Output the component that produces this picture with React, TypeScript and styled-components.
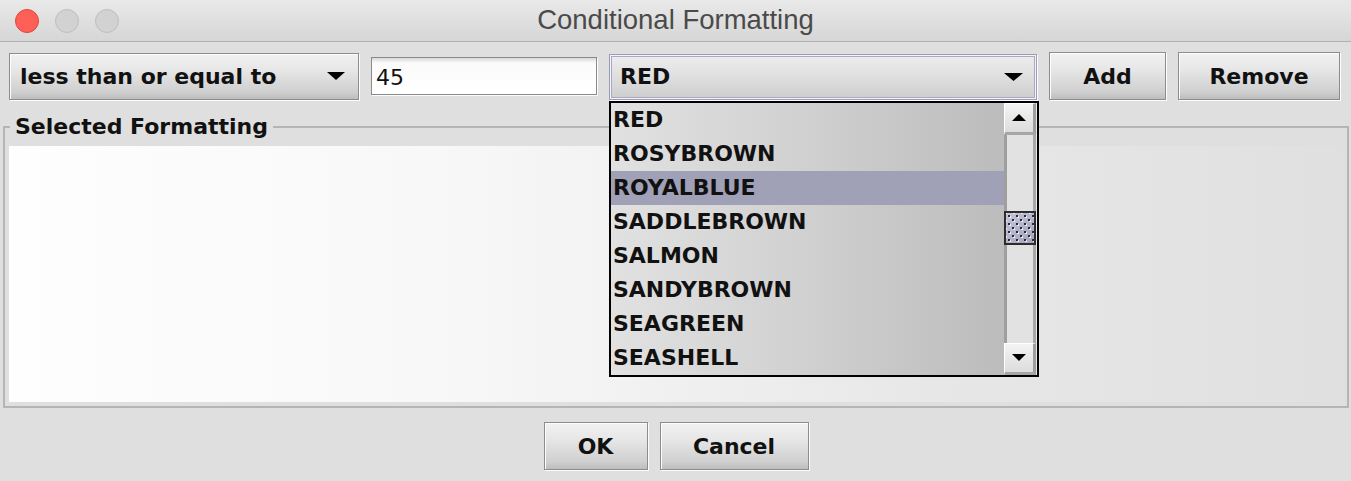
import React from 'react';
import styled, { createGlobalStyle } from 'styled-components';

const Global = createGlobalStyle`
  html, body { margin: 0; padding: 0; background: #dfdfdf; }
  body { font-family: "DejaVu Sans", sans-serif; }
  * { box-sizing: border-box; }
`;

const Window = styled.div`
  width: 1351px;
  height: 481px;
  display: flex;
  flex-direction: column;
  background: #dfdfdf;
  overflow: hidden;
`;

const TitleBar = styled.div`
  height: 42px;
  flex: none;
  display: grid;
  grid-template-columns: 1fr auto 1fr;
  align-items: center;
  background: linear-gradient(#e9e9e9, #d6d6d6);
  border-bottom: 1px solid #b0b0b0;
`;

const Lights = styled.div`
  display: flex;
  gap: 16px;
  padding-left: 15px;
`;

const Light = styled.span<{ $c: string; $b: string }>`
  width: 24px;
  height: 24px;
  border-radius: 50%;
  background: ${p => p.$c};
  border: 1px solid ${p => p.$b};
`;

const Title = styled.div`
  font-family: "Liberation Sans", Arial, sans-serif;
  font-size: 27.5px;
  color: #4a4a4a;
  line-height: 1;
  padding-bottom: 1px;
`;

const TopRow = styled.div`
  display: flex;
  align-items: center;
  gap: 12px;
  height: 48px;
  margin-top: 10px;
  padding-left: 9px;
  flex: none;
`;

const Bevel = styled.div`
  border: 1px solid #8c8c8c;
  box-shadow: inset 1px 1px 0 #fdfdfd, 1px 1px 0 #fdfdfd;
  background: linear-gradient(#f1f1f1, #e7e7e7 35%, #cfcfcf 85%, #bdbdbd);
  font-family: "DejaVu Sans", sans-serif;
  font-weight: bold;
  font-size: 22px;
  color: #111;
`;

const Combo = styled(Bevel)<{ $w: number; $h: number; $focus?: boolean }>`
  width: ${p => p.$w}px;
  height: ${p => p.$h}px;
  display: flex;
  align-items: center;
  justify-content: space-between;
  padding: 0 13px 0 10px;
  flex: none;
  ${p =>
    p.$focus &&
    `
    border-color: #9c9cb6;
    box-shadow: inset 0 0 0 1px #f4f4f8, inset 0 0 0 2px #a9a9c3, 1px 1px 0 #fdfdfd;
    background: linear-gradient(#ededed, #e2e2e2 40%, #cdcdcd);
  `}
`;

const ComboWrap = styled.div`
  position: relative;
  flex: none;
  margin-top: 1px;
`;

const TextField = styled.input`
  width: 226px;
  height: 38px;
  flex: none;
  border: 1px solid #8a8a8a;
  box-shadow: 1px 1px 0 #fdfdfd;
  background: linear-gradient(#d9d9d9, #fbfbfb 5px, #ffffff);
  font-family: "DejaVu Sans", sans-serif;
  font-size: 22px;
  color: #111;
  padding: 2px 0 0 4px;
  outline: none;
`;

const Button = styled(Bevel).attrs({ as: 'button' })<{ $w: number }>`
  width: ${p => p.$w}px;
  height: 48px;
  flex: none;
  padding: 0;
  display: flex;
  align-items: center;
  justify-content: center;
`;

const Popup = styled.div`
  position: absolute;
  top: calc(100% + 1px);
  left: 0;
  width: 430px;
  height: 276px;
  border: 2px solid #000;
  background: #fff;
  display: flex;
  z-index: 10;
`;

const List = styled.div`
  flex: 1;
  background: linear-gradient(to right, #e1e1e1, #d2d2d2 45%, #bcbcbc);
  display: flex;
  flex-direction: column;
`;

const Item = styled.div<{ $sel?: boolean }>`
  height: 34px;
  line-height: 34px;
  padding-left: 2px;
  font-weight: bold;
  font-size: 22px;
  color: #111;
  background: ${p => (p.$sel ? '#a0a0b6' : 'transparent')};
`;

const ScrollBar = styled.div`
  width: 33px;
  flex: none;
  display: flex;
  flex-direction: column;
  background: #e3e3e3;
  border-right: 1px solid #e8e8e8;
`;

const ScrollBtn = styled.div`
  height: 32px;
  flex: none;
  display: flex;
  align-items: center;
  justify-content: center;
  background: linear-gradient(#f4f4f4, #dcdcdc);
  border-top: 1px solid #ffffff;
  border-left: 1px solid #ffffff;
  border-right: 3px solid #9e9e9e;
  border-bottom: 3px solid #a6a6a6;
`;

const Track = styled.div<{ $fixed?: number }>`
  ${p => (p.$fixed ? `height: ${p.$fixed}px; flex: none;` : 'flex: 1;')}
  background: #e2e2e2;
  border-left: 3px solid #9f9f9f;
  border-right: 3px solid #a8a8a8;
`;

const Thumb = styled.div`
  height: 34px;
  flex: none;
  border: 2px solid #2c2c2c;
  background-color: #b2b2c8;
  background-image:
    radial-gradient(circle, #2a2a36 0.9px, transparent 1.2px),
    radial-gradient(circle, #2a2a36 0.9px, transparent 1.2px),
    radial-gradient(circle, #ececf6 0.9px, transparent 1.2px),
    radial-gradient(circle, #ececf6 0.9px, transparent 1.2px),
    linear-gradient(135deg, #c6c6da, #a2a2ba);
  background-size: 8px 8px, 8px 8px, 8px 8px, 8px 8px, 100% 100%;
  background-position: 3px 3px, 7px 7px, 0px 0px, 4px 4px, 0 0;
`;

const Panel = styled.fieldset`
  margin: 14px 2px 0 3px;
  padding: 6px 4px 4px 4px;
  border: 2px solid #b5b5b5;
  min-width: 0;
  flex: none;
`;

const Legend = styled.legend`
  font-weight: bold;
  font-size: 22px;
  line-height: 26px;
  color: #111;
  padding: 0 5px;
  margin-left: 1px;
`;

const PanelBody = styled.div`
  height: 256px;
  background: linear-gradient(to right, #fefefe 0%, #f7f7f7 35%, #e7e7e7 70%, #e0e0e0 100%);
`;

const ButtonRow = styled.div`
  display: flex;
  justify-content: center;
  gap: 12px;
  padding-top: 14px;
  padding-left: 1px;
`;

const DownArrow = ({ w = 18, h = 8 }: { w?: number; h?: number }) => (
  <svg width={w} height={h} viewBox={`0 0 ${w} ${h}`}>
    <polygon points={`0,0 ${w},0 ${w / 2},${h}`} fill="#000" />
  </svg>
);

const UpArrow = ({ w = 14, h = 7 }: { w?: number; h?: number }) => (
  <svg width={w} height={h} viewBox={`0 0 ${w} ${h}`}>
    <polygon points={`0,${h} ${w},${h} ${w / 2},0`} fill="#000" />
  </svg>
);

const colors = ['RED', 'ROSYBROWN', 'ROYALBLUE', 'SADDLEBROWN', 'SALMON', 'SANDYBROWN', 'SEAGREEN', 'SEASHELL'];

export default function App() {
  return (
    <>
      <Global />
      <Window>
        <TitleBar>
          <Lights>
            <Light $c="#fe5f57" $b="#e2463f" />
            <Light $c="#d2d2d2" $b="#bebebe" />
            <Light $c="#d2d2d2" $b="#bebebe" />
          </Lights>
          <Title>Conditional Formatting</Title>
          <div />
        </TitleBar>
        <TopRow>
          <Combo $w={350} $h={47}>
            <span>less than or equal to</span>
            <DownArrow />
          </Combo>
          <TextField defaultValue="45" readOnly />
          <ComboWrap>
            <Combo $w={428} $h={46} $focus>
              <span>RED</span>
              <DownArrow w={19} h={8} />
            </Combo>
            <Popup>
              <List>
                {colors.map(c => (
                  <Item key={c} $sel={c === 'ROYALBLUE'}>
                    {c}
                  </Item>
                ))}
              </List>
              <ScrollBar>
                <ScrollBtn>
                  <UpArrow />
                </ScrollBtn>
                <Track $fixed={76} />
                <Thumb />
                <Track />
                <ScrollBtn>
                  <DownArrow w={14} h={7} />
                </ScrollBtn>
              </ScrollBar>
            </Popup>
          </ComboWrap>
          <Button $w={117}>Add</Button>
          <Button $w={162}>Remove</Button>
        </TopRow>
        <Panel>
          <Legend>Selected Formatting</Legend>
          <PanelBody />
        </Panel>
        <ButtonRow>
          <Button $w={104}>OK</Button>
          <Button $w={149}>Cancel</Button>
        </ButtonRow>
      </Window>
    </>
  );
}
